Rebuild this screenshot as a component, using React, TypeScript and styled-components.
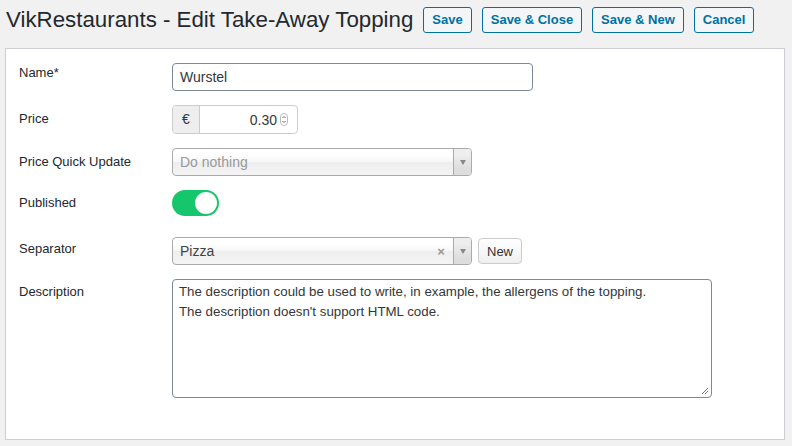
import { createGlobalStyle, styled } from "styled-components";

const GlobalStyle = createGlobalStyle`
  html, body {
    margin: 0;
    padding: 0;
    background: #f1f1f1;
    font-family: "Liberation Sans", Arial, sans-serif;
    color: #23282d;
  }
`;

const Header = styled.div`
  display: flex;
  align-items: center;
  padding: 7px 6px 0 6px;
  height: 26px;
`;

const Title = styled.h1`
  margin: 0 10px 0 0;
  font-size: 22.3px;
  font-weight: 400;
  color: #23282d;
  white-space: nowrap;
`;

const ToolButton = styled.button`
  height: 26px;
  margin-right: 10px;
  padding: 0 8px;
  border: 1px solid #0071a1;
  border-radius: 3px;
  background: #f3f5f6;
  color: #0071a1;
  font-family: inherit;
  font-size: 13px;
  font-weight: 700;
  line-height: 24px;
  white-space: nowrap;
`;

const Panel = styled.div`
  margin: 15px 7px 0 5px;
  height: 392px;
  box-sizing: border-box;
  background: #fff;
  border: 1px solid #ccd0d4;
  box-shadow: 0 1px 1px rgba(0, 0, 0, 0.04);
  padding: 14px 14px 0 13px;
`;

const Row = styled.div<{ $gap?: number }>`
  display: grid;
  grid-template-columns: 153px 1fr;
  align-items: start;
  margin-bottom: ${({ $gap }) => $gap ?? 14}px;
`;

const Label = styled.label<{ $top?: number }>`
  padding-top: ${({ $top }) => $top ?? 5}px;
  font-size: 13px;
  line-height: 18px;
  color: #23282d;
`;

const TextInput = styled.div<{ $width: number }>`
  width: ${({ $width }) => $width}px;
  height: 28px;
  box-sizing: border-box;
  border: 1px solid #7e8993;
  border-radius: 4px;
  padding: 0 7px;
  font-size: 14px;
  line-height: 27px;
  color: #32373c;
`;

const InputGroup = styled.div`
  display: flex;
  width: 126px;
  height: 29px;
  box-sizing: border-box;
  border: 1px solid #ccc;
  border-radius: 4px;
  overflow: hidden;
`;

const Addon = styled.span`
  width: 26px;
  flex-shrink: 0;
  background: #eee;
  border-right: 1px solid #ccc;
  text-align: center;
  font-size: 14px;
  line-height: 27px;
  color: #333;
`;

const NumberField = styled.div`
  flex: 1;
  display: flex;
  align-items: center;
  justify-content: flex-end;
  padding-right: 9px;
  font-size: 14px;
  color: #32373c;
  gap: 3px;
`;

const Spinner = styled.svg`
  flex-shrink: 0;
`;

const Select = styled.div<{ $placeholder?: boolean }>`
  display: flex;
  align-items: center;
  width: 300px;
  height: 28px;
  box-sizing: border-box;
  border: 1px solid #aaa;
  border-radius: 4px;
  background: linear-gradient(#fff 20%, #f6f6f6 50%, #eee 52%, #f4f4f4 100%);
  font-size: 14px;
  color: ${({ $placeholder }) => ($placeholder ? "#999" : "#444")};
`;

const SelectText = styled.span`
  flex: 1;
  padding-left: 7px;
`;

const ClearIcon = styled.span`
  width: 16px;
  font-size: 13px;
  font-weight: 700;
  color: #999;
  text-align: center;
  margin-right: 4px;
`;

const Arrow = styled.span`
  width: 17px;
  height: 100%;
  display: flex;
  align-items: center;
  justify-content: center;
  border-left: 1px solid #aaa;
  background: linear-gradient(#eee 20%, #ddd 80%);
  border-radius: 0 3px 3px 0;

  &::after {
    content: "";
    border-left: 3px solid transparent;
    border-right: 3px solid transparent;
    border-top: 5px solid #888;
  }
`;

const Inline = styled.div`
  display: flex;
  align-items: center;
  gap: 6px;
`;

const SmallButton = styled.button`
  height: 26px;
  padding: 0 8px;
  border: 1px solid #ccc;
  border-radius: 4px;
  background: linear-gradient(#fff, #efefef);
  font-family: inherit;
  font-size: 13px;
  color: #333;
`;

const Toggle = styled.span<{ $on: boolean }>`
  display: flex;
  align-items: center;
  justify-content: ${({ $on }) => ($on ? "flex-end" : "flex-start")};
  width: 47px;
  height: 26px;
  box-sizing: border-box;
  padding: 2px;
  border-radius: 13px;
  background: ${({ $on }) => ($on ? "#16c66c" : "#ccc")};

  &::after {
    content: "";
    width: 22px;
    height: 22px;
    border-radius: 50%;
    background: #fff;
  }
`;

const TextArea = styled.div`
  position: relative;
  width: 540px;
  height: 119px;
  box-sizing: border-box;
  border: 1px solid #7e8993;
  border-radius: 4px;
  padding: 2px 6px;
  font-size: 13.3px;
  line-height: 20px;
  color: #32373c;
`;

const Grip = styled.svg`
  position: absolute;
  right: 2px;
  bottom: 2px;
`;

export default function App() {
  return (
    <>
      <GlobalStyle />
      <Header>
        <Title>VikRestaurants - Edit Take-Away Topping</Title>
        <ToolButton>Save</ToolButton>
        <ToolButton>Save &amp; Close</ToolButton>
        <ToolButton>Save &amp; New</ToolButton>
        <ToolButton>Cancel</ToolButton>
      </Header>
      <Panel>
        <Row>
          <Label $top={1}>Name*</Label>
          <TextInput $width={361}>Wurstel</TextInput>
        </Row>
        <Row>
          <Label>Price</Label>
          <InputGroup>
            <Addon>€</Addon>
            <NumberField>
              0.30
              <Spinner width="8" height="13" viewBox="0 0 8 13">
                <rect x="0.5" y="0.5" width="7" height="12" rx="3.5" fill="#fff" stroke="#bbb" />
                <path d="M2.5 5 L4 3.5 L5.5 5 M2.5 8 L4 9.5 L5.5 8" fill="none" stroke="#555" strokeWidth="0.9" />
              </Spinner>
            </NumberField>
          </InputGroup>
        </Row>
        <Row $gap={14}>
          <Label>Price Quick Update</Label>
          <Select $placeholder>
            <SelectText>Do nothing</SelectText>
            <Arrow />
          </Select>
        </Row>
        <Row $gap={21}>
          <Label $top={4}>Published</Label>
          <Toggle $on />
        </Row>
        <Row $gap={14}>
          <Label $top={3}>Separator</Label>
          <Inline>
            <Select>
              <SelectText>Pizza</SelectText>
              <ClearIcon>×</ClearIcon>
              <Arrow />
            </Select>
            <SmallButton>New</SmallButton>
          </Inline>
        </Row>
        <Row>
          <Label $top={4}>Description</Label>
          <TextArea>
            The description could be used to write, in example, the allergens of the topping.
            <br />
            The description doesn't support HTML code.
            <Grip width="8" height="8" viewBox="0 0 8 8">
              <path d="M7 1 L1 7 M7 4 L4 7" stroke="#777" strokeWidth="1" />
            </Grip>
          </TextArea>
        </Row>
      </Panel>
    </>
  );
}
